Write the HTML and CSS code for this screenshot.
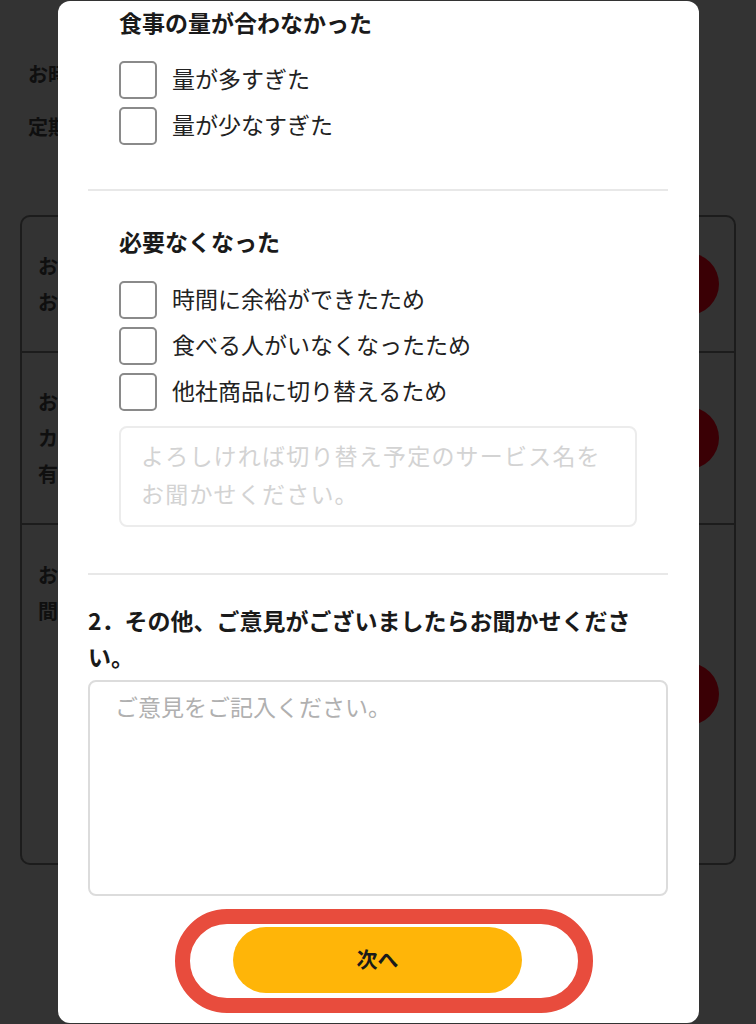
FILE: index.html
```html
<!DOCTYPE html>
<html lang="ja">
<head>
<meta charset="utf-8">
<title>解約アンケート</title>
<link rel="stylesheet" href="styles.css">
</head>
<body>
<main class="page">
  <div class="intro">
    <p>お時間をいただきありがとうございます。</p>
    <p>定期便の解約手続きについて</p>
  </div>
  <div class="card">
    <div class="row row-short">
      <div class="row-text"><p>お届け日を変更する</p><p>お休みを設定する</p></div>
      <span class="dot"></span>
    </div>
    <div class="row row-mid">
      <div class="row-text"><p>お届け内容を変更する</p><p>カロリーを選ぶ</p><p>有料オプション</p></div>
      <span class="dot"></span>
    </div>
    <div class="row row-tall">
      <div class="row-text row-text-top"><p>お届け間隔を変更する</p><p>間隔を空ける</p></div>
      <span class="dot"></span>
    </div>
  </div>
</main>

<div class="modal" role="dialog">
  <section class="group">
    <h3 class="group-title">食事の量が合わなかった</h3>
    <ul class="options">
      <li><label class="option"><input type="checkbox" class="check"><span class="option-text">量が多すぎた</span></label></li>
      <li><label class="option"><input type="checkbox" class="check"><span class="option-text">量が少なすぎた</span></label></li>
    </ul>
  </section>
  <hr class="divider divider-first">
  <section class="group">
    <h3 class="group-title group-title-spaced">必要なくなった</h3>
    <ul class="options options-spaced">
      <li><label class="option"><input type="checkbox" class="check"><span class="option-text">時間に余裕ができたため</span></label></li>
      <li><label class="option"><input type="checkbox" class="check"><span class="option-text">食べる人がいなくなったため</span></label></li>
      <li><label class="option"><input type="checkbox" class="check"><span class="option-text">他社商品に切り替えるため</span></label></li>
    </ul>
    <textarea class="service" placeholder="よろしければ切り替え予定のサービス名を&#10;お聞かせください。"></textarea>
  </section>
  <hr class="divider divider-second">
  <section class="question">
    <h3 class="question-title">2．その他、ご意見がございましたらお聞かせください。</h3>
    <textarea class="opinion" placeholder="ご意見をご記入ください。"></textarea>
  </section>
  <div class="ring">
    <button class="next" type="button">次へ</button>
  </div>
</div>
</body>
</html>
```

FILE: styles.css
```css
* {
  box-sizing: border-box;
}

html, body {
  margin: 0;
  padding: 0;
}

body {
  width: 756px;
  height: 1024px;
  overflow: hidden;
  background: #333333;
  font-family: "Noto Sans CJK JP", "Noto Sans", sans-serif;
  color: #222222;
  position: relative;
}

/* Page under the overlay */
.page {
  padding: 59px 20px 0;
}

.intro p {
  margin: 0;
  padding-left: 8px;
  font-size: 20px;
  line-height: 30px;
  font-weight: 700;
  color: #0f0f0f;
  white-space: nowrap;
}

.intro p + p {
  margin-top: 23px;
}

.card {
  margin-top: 73px;
  border: 2px solid #1c1c1c;
  border-radius: 10px;
}

.row {
  display: flex;
  align-items: center;
  justify-content: space-between;
  padding: 0 15px 0 16px;
}

.row + .row {
  border-top: 2px solid #1c1c1c;
}

.row-short {
  height: 134px;
}

.row-mid {
  height: 172px;
}

.row-tall {
  height: 340px;
}

.row-text p {
  margin: 0;
  font-size: 20px;
  line-height: 36px;
  font-weight: 700;
  color: #0f0f0f;
  white-space: nowrap;
}

.row-text-top {
  align-self: flex-start;
  padding-top: 32px;
}

.dot {
  width: 62px;
  height: 62px;
  border-radius: 50%;
  background: #3a0005;
  flex: none;
}

/* Modal */
.modal {
  position: absolute;
  left: 58px;
  top: 1px;
  width: 641px;
  height: 1022px;
  background: #ffffff;
  border-radius: 12px;
  overflow: hidden;
  padding: 4px 31px 0 30px;
}

.group {
  padding-left: 31px;
}

.group-title {
  margin: 0;
  font-size: 23px;
  line-height: 34px;
  font-weight: 700;
  color: #1a1a1a;
}

.group-title-spaced {
  margin-top: 33px;
}

.options {
  list-style: none;
  margin: 22px 0 0;
  padding: 0;
  display: flex;
  flex-direction: column;
  gap: 8px;
}

.options-spaced {
  margin-top: 23px;
}

.option {
  display: flex;
  align-items: center;
  gap: 15px;
  height: 38px;
  font-size: 23px;
  line-height: 30px;
  color: #222222;
}

.option-text {
  padding-bottom: 4px;
}

.check {
  appearance: none;
  -webkit-appearance: none;
  margin: 0;
  width: 38px;
  height: 38px;
  border: 2px solid #8a8a8a;
  border-radius: 5px;
  background: #ffffff;
  flex: none;
}

.divider {
  border: 0;
  height: 2px;
  background: #e8e8e8;
  margin: 0;
}

.divider-first {
  margin-top: 44px;
}

.divider-second {
  margin-top: 46px;
}

.service {
  display: block;
  width: 518px;
  height: 101px;
  margin: 15px 0 0;
  border: 2px solid #ececec;
  border-radius: 8px;
  padding: 8px 20px;
  font-family: "Noto Sans CJK JP", "Noto Sans", sans-serif;
  font-size: 23px;
  line-height: 38px;
  letter-spacing: 1.2px;
  resize: none;
  overflow: hidden;
  background: #ffffff;
}

.service::placeholder {
  color: #d3d3d3;
}

.question-title {
  margin: 27px 0 0;
  font-size: 23px;
  line-height: 36px;
  font-weight: 700;
  color: #1a1a1a;
}

.opinion {
  display: block;
  width: 100%;
  height: 216px;
  margin: 6px 0 0;
  border: 2px solid #dcdcdc;
  border-radius: 8px;
  padding: 7px 25px;
  font-family: "Noto Sans CJK JP", "Noto Sans", sans-serif;
  font-size: 23px;
  line-height: 34px;
  resize: none;
  overflow: hidden;
  background: #ffffff;
}

.opinion::placeholder {
  color: #b0b0b0;
}

.ring {
  width: fit-content;
  margin: 13px 0 0 87px;
  border: 15px solid #e84c3d;
  border-radius: 60px;
  padding: 3px 56px 5px 43px;
}

.next {
  display: block;
  width: 289px;
  height: 66px;
  border: 0;
  border-radius: 33px;
  background: #ffb508;
  font-family: "Noto Sans CJK JP", "Noto Sans", sans-serif;
  font-size: 21px;
  font-weight: 700;
  color: #1a1a1a;
  padding: 0 0 4px;
  cursor: pointer;
}
```
